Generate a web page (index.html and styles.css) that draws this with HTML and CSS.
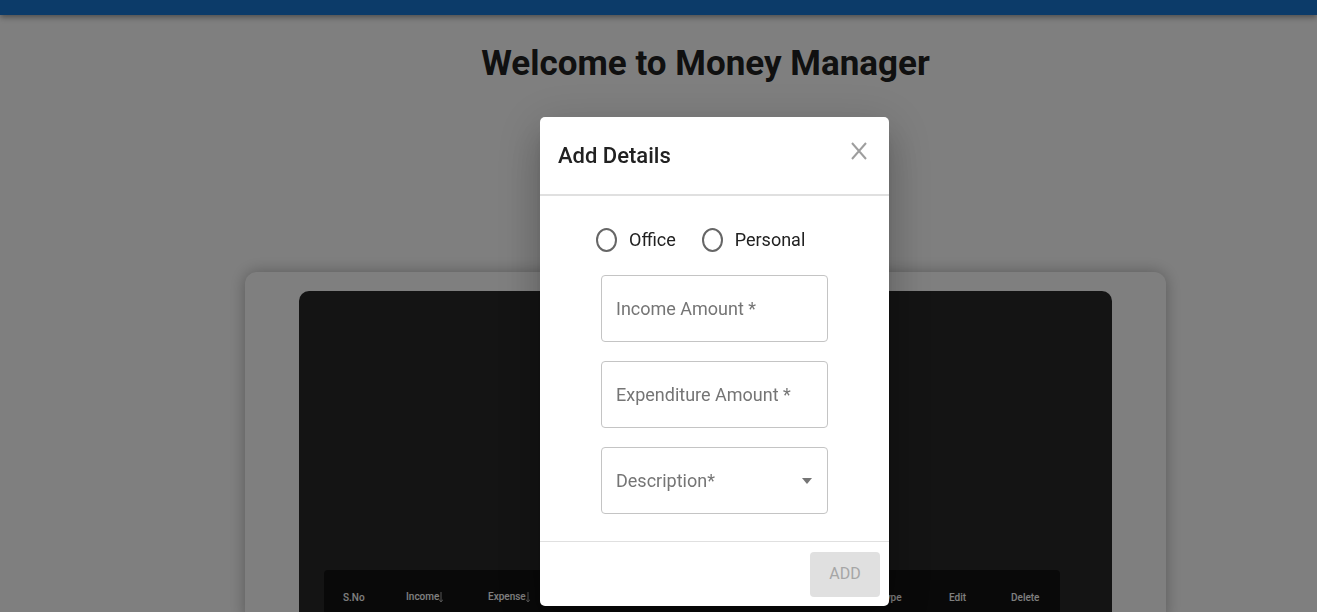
FILE: index.html
```
<!DOCTYPE html>
<html lang="en">
<head>
<meta charset="utf-8">
<meta name="viewport" content="width=device-width, initial-scale=1">
<title>Money Manager</title>
<link rel="stylesheet" href="styles.css">
</head>
<body>
<div class="page">
  <header class="app-bar"></header>
  <main class="main">
    <h1 class="title">Welcome to Money Manager</h1>
    <section class="card">
      <div class="panel">
        <table class="records">
          <colgroup>
            <col class="col-number"><col class="col-income"><col><col class="col-type"><col class="col-edit"><col class="col-delete">
          </colgroup>
          <thead>
            <tr><th>S.No</th><th>Income<svg class="sort" viewBox="0 0 4 11" aria-hidden="true"><path d="M2 0V10M0 7.500L2 10L4 7.500" fill="none" stroke="currentColor"/></svg></th><th>Expense<svg class="sort" viewBox="0 0 4 11" aria-hidden="true"><path d="M2 0V10M0 7.500L2 10L4 7.500" fill="none" stroke="currentColor"/></svg></th><th>Type</th><th>Edit</th><th>Delete</th></tr>
          </thead>
        </table>
      </div>
    </section>
  </main>
</div>
<div class="backdrop">
  <form class="dialog" role="dialog" aria-labelledby="dialog-title">
    <div class="dialog-header">
      <h2 class="dialog-title" id="dialog-title">Add Details</h2>
      <button class="close" type="button" aria-label="Close">
        <svg class="close-icon" viewBox="0 0 16 18" aria-hidden="true"><path d="M1 1L15 17M15 1L1 17" fill="none" stroke="currentColor" stroke-width="2"/></svg>
      </button>
    </div>
    <div class="dialog-content">
      <div class="radios">
        <label class="option"><input class="radio" type="radio" name="kind">Office</label>
        <label class="option"><input class="radio" type="radio" name="kind">Personal</label>
      </div>
      <div class="fields">
        <div class="field">
          <input class="control" id="income" type="text">
          <label class="label" for="income">Income Amount *</label>
        </div>
        <div class="field">
          <input class="control" id="expenditure" type="text">
          <label class="label" for="expenditure">Expenditure Amount *</label>
        </div>
        <div class="field">
          <select class="control" id="description"><option value=""></option></select>
          <label class="label" for="description">Description*</label>
          <svg class="arrow" viewBox="0 0 10 6" aria-hidden="true"><path d="M0 0h10L5 6z" fill="currentColor"/></svg>
        </div>
      </div>
    </div>
    <div class="dialog-actions">
      <button class="add" type="submit" disabled>ADD</button>
    </div>
  </form>
</div>
</body>
</html>
```
FILE: styles.css
```
* { box-sizing: border-box; }
body {
  margin: 0;
  font-family: Roboto, "Liberation Sans", sans-serif;
  color: #212121;
  background: #fff;
}
.page {
  display: flex;
  flex-direction: column;
  height: 100vh;
  overflow: hidden;
}
.app-bar {
  flex: none;
  height: 15px;
  background: #1976d2;
  box-shadow: 0 2px 4px -1px rgba(0, 0, 0, .2), 0 4px 5px rgba(0, 0, 0, .14), 0 1px 10px rgba(0, 0, 0, .12);
}
.main {
  flex: 1;
  display: flex;
  flex-direction: column;
  align-items: center;
  padding: 25px 0 0 94px;
}
.title {
  margin: 0 0 184px;
  font-size: 35px;
  line-height: 48px;
  font-weight: 700;
}
.card {
  flex: 1 0 auto;
  width: 921px;
  max-width: 100%;
  display: flex;
  padding: 19px 54px 0;
  border-radius: 12px;
  box-shadow: 0 0 16px rgba(0, 0, 0, .3);
}
.panel {
  flex: 1;
  padding: 279px 52px 0 25px;
  border-radius: 10px 10px 0 0;
  background: #282828;
}
.records {
  width: 100%;
  table-layout: fixed;
  border-spacing: 0;
  border-radius: 4px 4px 0 0;
  background: #121212;
}
.records th {
  height: 54px;
  padding: 0 0 0 19px;
  font-size: 10px;
  font-weight: 500;
  text-align: left;
  white-space: nowrap;
  color: #fff;
}
.sort {
  width: 4px;
  height: 11px;
  vertical-align: -3px;
  color: #aaa;
}
.col-number { width: 63px; }
.col-income { width: 82px; }
.col-type { width: 69px; }
.col-edit { width: 62px; }
.col-delete { width: 68px; }
.backdrop {
  position: fixed;
  inset: 0;
  display: flex;
  align-items: flex-end;
  justify-content: center;
  padding: 0 0 6px 112px;
  background: rgba(0, 0, 0, .5);
}
.dialog {
  width: 349px;
  border-radius: 5px;
  background: #fff;
  box-shadow: 0 11px 15px -7px rgba(0, 0, 0, .2), 0 24px 38px 3px rgba(0, 0, 0, .14), 0 9px 46px 8px rgba(0, 0, 0, .12);
}
.dialog-header {
  display: flex;
  align-items: flex-start;
  justify-content: space-between;
  padding: 23px 22px 22px 18px;
  border-bottom: 2px solid #e0e0e0;
}
.dialog-title {
  margin: 0;
  font-size: 22px;
  line-height: 32px;
  font-weight: 500;
}
.close {
  display: flex;
  margin: 2px 0 0;
  padding: 0;
  border: 0;
  background: none;
  color: #9e9e9e;
}
.close-icon { width: 16px; height: 18px; }
.dialog-content { padding: 30px 56px 27px; }
.radios {
  display: flex;
  gap: 26px;
  margin-bottom: 22px;
}
.option {
  display: flex;
  align-items: center;
  gap: 12px;
  height: 27px;
  font-size: 18px;
  line-height: 26px;
}
.radio {
  appearance: none;
  width: 21px;
  height: 24px;
  margin: 0;
  border: 2px solid #666;
  border-radius: 50%;
}
.radio:checked { background: radial-gradient(#1976d2 45%, transparent 50%); }
.fields {
  display: grid;
  gap: 19px;
  padding: 0 5px;
}
.field {
  display: grid;
  align-items: center;
}
.field > * { grid-area: 1 / 1; }
.control {
  appearance: none;
  width: 100%;
  height: 67px;
  padding: 0 15px;
  border: 1px solid #c4c4c4;
  border-radius: 4px;
  background: #fff;
  font: inherit;
  font-size: 18px;
}
.label {
  padding-left: 15px;
  font-size: 18px;
  line-height: 24px;
  color: #757575;
  pointer-events: none;
}
.arrow {
  justify-self: end;
  width: 10px;
  height: 6px;
  margin-right: 16px;
  color: #757575;
  pointer-events: none;
}
.dialog-actions {
  display: flex;
  justify-content: flex-end;
  padding: 10px 9px 9px;
  border-top: 1px solid #e0e0e0;
}
.add {
  width: 70px;
  height: 45px;
  padding: 0 0 2px;
  border: 0;
  border-radius: 4px;
  background: #e0e0e0;
  color: #a6a6a6;
  font: inherit;
  font-size: 16px;
}
```
